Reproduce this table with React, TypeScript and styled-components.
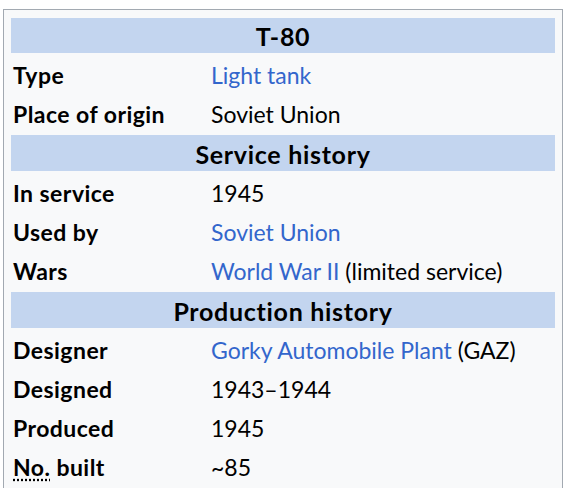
import React from 'react'
import styled, { createGlobalStyle } from 'styled-components'

const Global = createGlobalStyle`
    body {
        margin: 0;
        background: #ffffff;
        font-family: Lato, "Noto Sans", sans-serif;
        color: #000;
    }
`

const Infobox = styled.div`
    margin: 9px 0 0 3px;
    width: 544px;
    border: 1px solid #a2a9b1;
    background: #f8f9fa;
    padding: 8px 7px 0 7px;
    display: flex;
    flex-direction: column;
    gap: 4px;
`

const Header = styled.div<{ $h?: number }>`
    background: #c3d5ef;
    height: ${p => p.$h ?? 36}px;
    display: flex;
    align-items: center;
    justify-content: center;
    font-weight: bold;
    font-size: 25px;
    letter-spacing: 0.7px;
    padding-top: 1px;
    box-sizing: border-box;
`

const Row = styled.div`
    height: 35px;
    display: grid;
    grid-template-columns: 198px 1fr;
    align-items: center;
    font-size: 23px;
    padding: 1px 0 0 2px;
    box-sizing: border-box;
`

const Label = styled.div`
    font-weight: bold;
    letter-spacing: 0.45px;
`

const Value = styled.div``

const Link = styled.span`
    color: #3366cc;
`

const Abbr = styled.span`
    text-decoration: underline dotted;
    text-underline-offset: 3px;
`

const App = () => {
    return (
        <>
            <Global />
            <Infobox>
                <Header $h={35}>T-80</Header>
                <Row><Label>Type</Label><Value><Link>Light tank</Link></Value></Row>
                <Row><Label>Place of origin</Label><Value>Soviet Union</Value></Row>
                <Header>Service history</Header>
                <Row><Label>In service</Label><Value>1945</Value></Row>
                <Row><Label>Used by</Label><Value><Link>Soviet Union</Link></Value></Row>
                <Row><Label>Wars</Label><Value><Link>World War II</Link> (limited service)</Value></Row>
                <Header>Production history</Header>
                <Row><Label>Designer</Label><Value><Link>Gorky Automobile Plant</Link> (GAZ)</Value></Row>
                <Row><Label>Designed</Label><Value>1943–1944</Value></Row>
                <Row><Label>Produced</Label><Value>1945</Value></Row>
                <Row><Label><Abbr>No.</Abbr> built</Label><Value>~85</Value></Row>
                <Header />
            </Infobox>
        </>
    )
}

export default App
